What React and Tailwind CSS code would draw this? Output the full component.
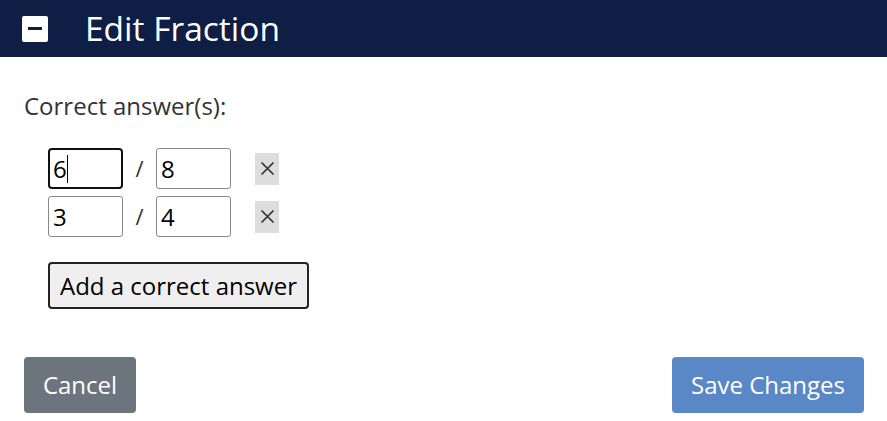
export default function App() {
  const rows = [
    ["6", "8", true],
    ["3", "4", false],
  ];

  return (
    <div className="w-[887px] h-[421px] bg-white font-['Open_Sans',sans-serif] text-[#333]">
      {/* header */}
      <div className="h-[57px] bg-[#0e1e45] flex items-center pl-[22px]">
        <div className="w-[26px] h-[26px] bg-white rounded-[2px] flex items-center justify-center">
          <div className="w-[14px] h-[3px] bg-[#0e1e45]" />
        </div>
        <h1 className="ml-[37px] text-[33.5px] text-white leading-none">Edit Fraction</h1>
      </div>

      <div className="px-[24px]">
        <p className="mt-[33px] text-[24px] leading-[32px] text-[#333]">Correct answer(s):</p>

        <div className="mt-[26px] ml-[24px] flex flex-col gap-[7px]">
          {rows.map(([n, d, focus], i) => (
            <div key={i} className="flex items-center">
              <div
                className={
                  focus
                    ? "w-[75px] h-[41px] border-2 border-[#111] rounded-[4px] pl-[3px] flex items-center text-[24px] text-black"
                    : "w-[75px] h-[41px] border border-[#888] rounded-[3px] pl-[4px] flex items-center text-[24px] text-black"
                }
              >
                {n}
                {focus && <span className="w-px h-[28px] bg-black" />}
              </div>
              <span className="w-[33px] text-center text-[22px] text-[#333]">/</span>
              <div className="w-[75px] h-[41px] border border-[#888] rounded-[3px] pl-[4px] flex items-center text-[24px] text-black">
                {d}
              </div>
              <button className="ml-[24px] w-[24px] h-[32px] bg-[#dddddd] flex items-center justify-center">
                <svg width="15" height="15" viewBox="0 0 15 15">
                  <path d="M1.5 1.5 L13.5 13.5 M13.5 1.5 L1.5 13.5" stroke="#333" strokeWidth="1.7" />
                </svg>
              </button>
            </div>
          ))}
        </div>

        <button className="mt-[25px] ml-[24px] w-[261px] h-[47px] border-2 border-[#222] rounded-[4px] bg-[#efefef] text-[24px] text-black">
          Add a correct answer
        </button>

        <div className="mt-[48px] flex justify-between">
          <button className="w-[112px] h-[56px] rounded-[4px] bg-[#6c757d] text-white text-[24px]">
            Cancel
          </button>
          <button className="mr-[-1px] w-[192px] h-[56px] rounded-[4px] bg-[#5a88c6] text-white text-[24px]">
            Save Changes
          </button>
        </div>
      </div>
    </div>
  );
}
